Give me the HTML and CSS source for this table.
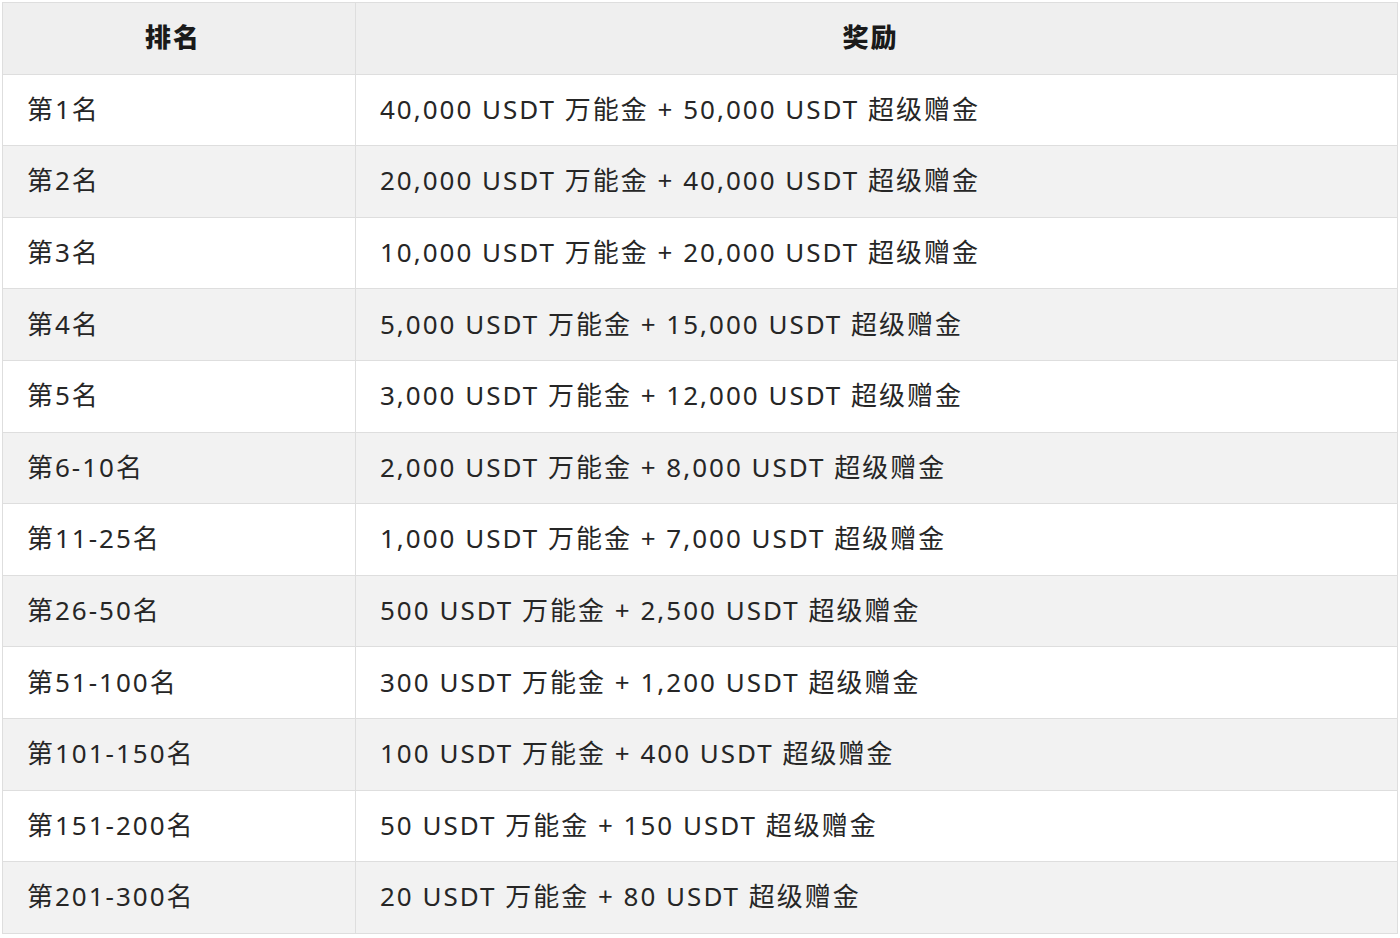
FILE: index.html
```html
<!DOCTYPE html>
<html lang="zh-CN">
<head>
<meta charset="utf-8">
<title>排名奖励</title>
<link rel="stylesheet" href="styles.css">
</head>
<body>
<table class="rewards">
  <colgroup><col class="col-rank"><col class="col-reward"></colgroup>
  <thead>
    <tr><th>排名</th><th>奖励</th></tr>
  </thead>
  <tbody>
    <tr><td>第1名</td><td>40,000 USDT 万能金 + 50,000 USDT 超级赠金</td></tr>
    <tr><td>第2名</td><td>20,000 USDT 万能金 + 40,000 USDT 超级赠金</td></tr>
    <tr><td>第3名</td><td>10,000 USDT 万能金 + 20,000 USDT 超级赠金</td></tr>
    <tr><td>第4名</td><td>5,000 USDT 万能金 + 15,000 USDT 超级赠金</td></tr>
    <tr><td>第5名</td><td>3,000 USDT 万能金 + 12,000 USDT 超级赠金</td></tr>
    <tr><td>第6-10名</td><td>2,000 USDT 万能金 + 8,000 USDT 超级赠金</td></tr>
    <tr><td>第11-25名</td><td>1,000 USDT 万能金 + 7,000 USDT 超级赠金</td></tr>
    <tr><td>第26-50名</td><td>500 USDT 万能金 + 2,500 USDT 超级赠金</td></tr>
    <tr><td>第51-100名</td><td>300 USDT 万能金 + 1,200 USDT 超级赠金</td></tr>
    <tr><td>第101-150名</td><td>100 USDT 万能金 + 400 USDT 超级赠金</td></tr>
    <tr><td>第151-200名</td><td>50 USDT 万能金 + 150 USDT 超级赠金</td></tr>
    <tr><td>第201-300名</td><td>20 USDT 万能金 + 80 USDT 超级赠金</td></tr>
  </tbody>
</table>
</body>
</html>
```
FILE: styles.css
```css
html, body {
  margin: 0;
  padding: 0;
  background: #ffffff;
}
body {
  padding: 2px;
  font-family: "Noto Sans", "Noto Sans CJK SC", sans-serif;
  color: #262626;
}
.rewards {
  width: 1396px;
  border-collapse: collapse;
  table-layout: fixed;
  font-size: 26px;
  letter-spacing: 2px;
}
.col-rank { width: 353px; }
.rewards th,
.rewards td {
  border: 1px solid #dedede;
  height: 71.6px;
  padding: 0 0 4px 24px;
  box-sizing: border-box;
  vertical-align: middle;
  white-space: nowrap;
}
.rewards th {
  background: #efefef;
  font-weight: 900;
  text-align: center;
  padding: 0 12px 4px 0;
  color: #1a1a1a;
}
.rewards tbody tr:nth-child(odd) { background: #ffffff; }
.rewards tbody tr:nth-child(even) { background: #f2f2f2; }
```
